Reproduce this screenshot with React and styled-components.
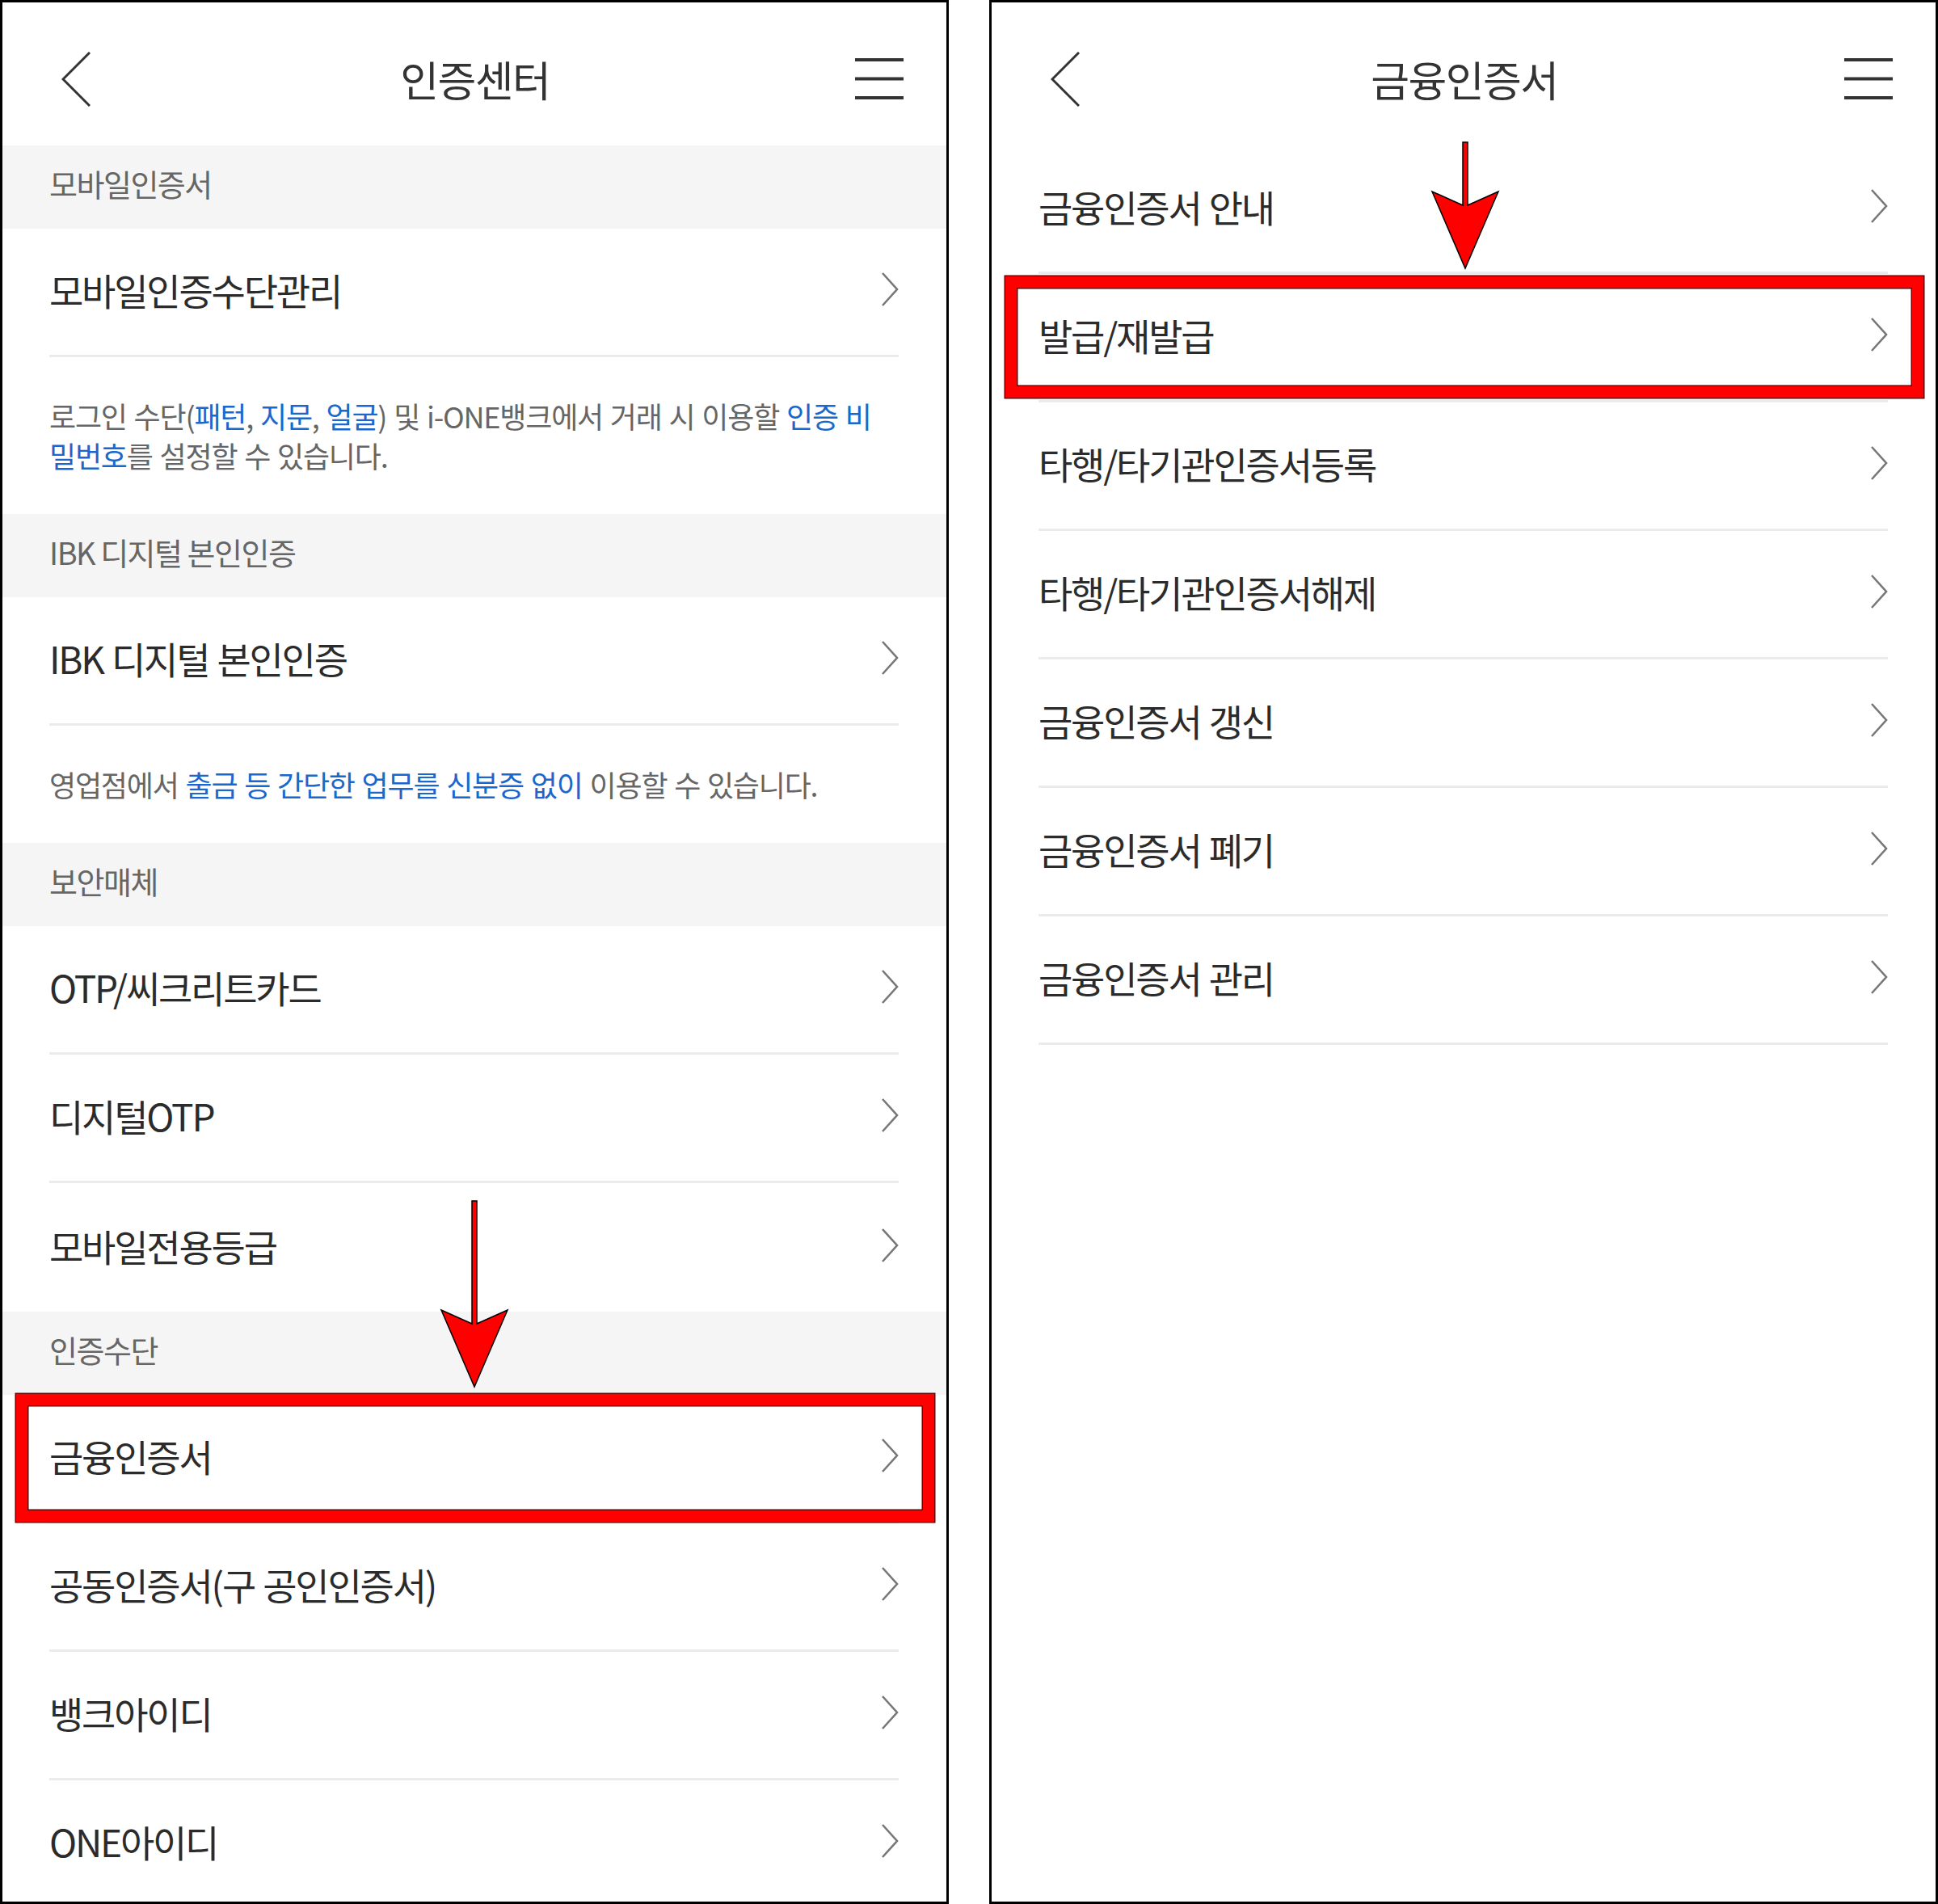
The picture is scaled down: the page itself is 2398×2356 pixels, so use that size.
import React from "react";
import styled, { createGlobalStyle } from "styled-components";

const GlobalStyle = createGlobalStyle`
  html, body {
    margin: 0;
    padding: 0;
    background: #ffffff;
  }
  body {
    font-family: "Noto Sans CJK KR", "Noto Sans", sans-serif;
  }
`;

const Page = styled.div`
  display: flex;
  gap: 50px;
  width: 2398px;
  height: 2356px;
`;

const Panel = styled.div`
  position: relative;
  display: flex;
  flex-direction: column;
  width: 1174px;
  height: 2356px;
  border: 3px solid #000000;
  box-sizing: border-box;
  overflow: hidden;
  background: #ffffff;
`;

const Header = styled.div`
  display: grid;
  grid-template-columns: 1fr auto 1fr;
  align-items: center;
  height: 177px;
  padding: 12px 53px 0 53px;
  box-sizing: border-box;
  flex-shrink: 0;
`;

const Title = styled.h1`
  margin: 0 -1.6px 0 0;
  font-size: 52px;
  font-weight: 400;
  letter-spacing: -1.6px;
  line-height: 1;
  color: #333333;
`;

const IconButton = styled.div`
  display: flex;
  justify-content: ${(p) => (p.$end ? "flex-end" : "flex-start")};
  padding-left: ${(p) => (p.$end ? 0 : 20)}px;
`;

const Band = styled.div`
  display: flex;
  align-items: center;
  height: 103px;
  padding: 0 58px 10px;
  box-sizing: border-box;
  flex-shrink: 0;
  background: #f5f5f5;
  font-size: 38px;
  letter-spacing: -1.5px;
  color: #666666;
`;

const Row = styled.div`
  position: relative;
  display: flex;
  align-items: center;
  justify-content: space-between;
  height: 159px;
  margin: 0 59px 0 58px;
  padding-bottom: 6px;
  box-sizing: border-box;
  flex-shrink: 0;
  border-bottom: ${(p) => (p.$divider ? "3px solid #ebebeb" : "none")};
  font-size: 46px;
  letter-spacing: -2.2px;
  word-spacing: 2px;
  color: #2b2b2b;
`;

const Description = styled.div`
  display: flex;
  flex-direction: column;
  justify-content: center;
  height: ${(p) => p.$height}px;
  padding: 0 58px;
  box-sizing: border-box;
  flex-shrink: 0;
  font-size: 36px;
  letter-spacing: -1.2px;
  word-spacing: 2px;
  line-height: 49px;
  color: #666666;
  white-space: nowrap;
`;

const Blue = styled.span`
  color: #1b68cc;
`;

const Highlight = styled.div`
  position: absolute;
  top: ${(p) => p.$top}px;
  bottom: ${(p) => p.$bottom}px;
  left: -41px;
  right: -44px;
  border: 14px solid #ff0000;
  box-shadow: 0 0 0 1.5px #6a0000, inset 0 0 0 1.5px #6a0000;
  z-index: 2;
  pointer-events: none;
`;

const ArrowSvg = styled.svg`
  position: absolute;
  top: ${(p) => p.$top}px;
  left: ${(p) => p.$left}px;
  z-index: 3;
  overflow: visible;
`;

function BackIcon() {
  return (
    <svg width="36" height="68" viewBox="0 0 36 68">
      <polyline points="35,1 2,34 35,67" fill="none" stroke="#333" strokeWidth="3" />
    </svg>
  );
}

function MenuIcon() {
  return (
    <svg width="60" height="52" viewBox="0 0 60 52">
      <rect x="0" y="0" width="60" height="4" fill="#333" />
      <rect x="0" y="23.5" width="60" height="4" fill="#333" />
      <rect x="0" y="47" width="60" height="4" fill="#333" />
    </svg>
  );
}

function Chevron() {
  return (
    <svg width="22" height="42" viewBox="0 0 22 42">
      <polyline points="2,1 20,21 2,41" fill="none" stroke="#777" strokeWidth="2.6" />
    </svg>
  );
}

// red pointer arrow; c = centre, head starts at headTop, barbs meet shaft 17px lower
function Arrow({ top, left, length }) {
  const c = 45;
  const shaftTop = 6;
  const tip = shaftTop + length;
  const headTop = tip - 95;
  const notch = headTop + 17;
  const d = `M${c - 3},${shaftTop} L${c + 3},${shaftTop} L${c + 3},${notch} L${c + 41},${headTop} L${c},${tip} L${c - 41},${headTop} L${c - 3},${notch} Z`;
  return (
    <ArrowSvg $top={top} $left={left} width="90" height={tip + 4} viewBox={`0 0 90 ${tip + 4}`}>
      <path d={d} fill="#ff0000" stroke="#000" strokeWidth="1.5" strokeLinejoin="miter" />
    </ArrowSvg>
  );
}

function MenuRow({ label, divider = true, highlight }) {
  return (
    <Row $divider={divider}>
      <span>{label}</span>
      <Chevron />
      {highlight && <Highlight $top={highlight[0]} $bottom={highlight[1]} />}
    </Row>
  );
}

function TopBar({ title }) {
  return (
    <Header>
      <IconButton>
        <BackIcon />
      </IconButton>
      <Title>{title}</Title>
      <IconButton $end>
        <MenuIcon />
      </IconButton>
    </Header>
  );
}

const certMenu = [
  "금융인증서 안내",
  "발급/재발급",
  "타행/타기관인증서등록",
  "타행/타기관인증서해제",
  "금융인증서 갱신",
  "금융인증서 폐기",
  "금융인증서 관리",
];

function App() {
  return (
    <>
      <GlobalStyle />
      <Page>
        <Panel>
          <TopBar title="인증센터" />
          <Band>모바일인증서</Band>
          <MenuRow label="모바일인증수단관리" />
          <Description $height={194}>
            <div>
              로그인 수단(<Blue>패턴</Blue>, <Blue>지문</Blue>, <Blue>얼굴</Blue>) 및 i-ONE뱅크에서 거래 시 이용할{" "}
              <Blue>인증 비</Blue>
            </div>
            <div>
              <Blue>밀번호</Blue>를 설정할 수 있습니다.
            </div>
          </Description>
          <Band>IBK 디지털 본인인증</Band>
          <MenuRow label="IBK 디지털 본인인증" />
          <Description $height={145}>
            <div>
              영업점에서 <Blue>출금 등 간단한 업무를 신분증 없이</Blue> 이용할 수 있습니다.
            </div>
          </Description>
          <Band>보안매체</Band>
          <MenuRow label="OTP/씨크리트카드" />
          <MenuRow label="디지털OTP" />
          <MenuRow label="모바일전용등급" divider={false} />
          <Band>인증수단</Band>
          <MenuRow label="금융인증서" highlight={[-1, -1]} />
          <MenuRow label="공동인증서(구 공인인증서)" />
          <MenuRow label="뱅크아이디" />
          <MenuRow label="ONE아이디" />
          <Arrow top={1477} left={539} length={230} />
        </Panel>

        <Panel>
          <TopBar title="금융인증서" />
          {certMenu.map((label, i) => (
            <MenuRow key={label} label={label} highlight={i === 1 ? [3, 3] : null} />
          ))}
          <Arrow top={167} left={541} length={156} />
        </Panel>
      </Page>
    </>
  );
}

export default App;
